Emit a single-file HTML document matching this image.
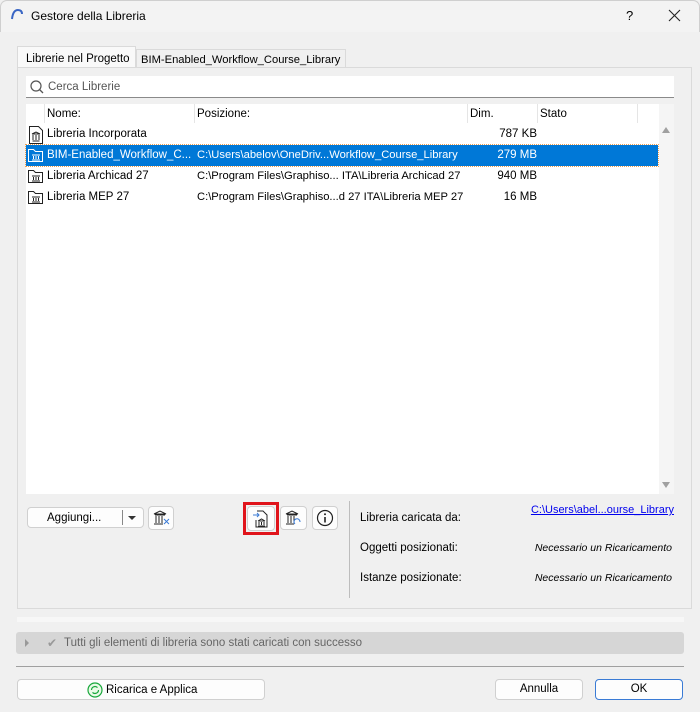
<!DOCTYPE html>
<html><head><meta charset="utf-8"><style>
*{box-sizing:border-box;margin:0;padding:0}
body{width:700px;height:712px;background:#f0f0f0;font-family:"Liberation Sans","DejaVu Sans",sans-serif;font-size:11.5px;color:#000;position:relative;overflow:hidden}
.a{position:absolute;white-space:nowrap}
.title{left:0;top:0;width:700px;height:32px;background:#f3f3f3;border:1px solid #cfcfcf;border-bottom:none;border-radius:7px 7px 0 0}
.btn{position:absolute;background:#fdfdfd;border:1px solid #d0d0d0;border-radius:4px;text-align:center}
.row{position:absolute;left:26px;width:632px;height:21px;line-height:21px;white-space:nowrap}
.row span{position:absolute}
.row .p{left:171px;font-size:11.2px}
.row .r{right:121px;text-align:right}
.sel{background:#0078d7;color:#fff;outline:1px dotted #f0a050}
.rt{position:absolute;right:26px;text-align:right;white-space:nowrap}
</style></head><body>
<div class="a title"></div>
<svg class="a" style="left:10px;top:8px" width="14" height="12"><path d="M2 11 Q3 2 8 2 Q12 2 12 6" fill="none" stroke="#3a66c4" stroke-width="2"/></svg>
<div class="a" style="left:31px;top:9px;font-size:12px">Gestore della Libreria</div>
<div class="a" style="left:626px;top:8px;font-size:13px">?</div>
<svg class="a" style="left:668px;top:9px" width="13" height="13"><path d="M1 1L12 12M12 1L1 12" stroke="#222" stroke-width="1.1"/></svg>
<!-- tabs -->
<div class="a" style="left:17px;top:46px;width:119px;height:22px;background:#f9f9f9;border:1px solid #dadada;border-bottom:none;padding:6px 0 0 8px;font-size:11.5px">Librerie nel Progetto</div>
<div class="a" style="left:136px;top:49px;width:210px;height:19px;background:#f0f0f0;border:1px solid #dadada;border-bottom:none;padding:4px 0 0 4px;font-size:11.2px">BIM-Enabled_Workflow_Course_Library</div>
<div class="a" style="left:17px;top:67px;width:675px;height:542px;border:1px solid #dadada;background:#f0f0f0"></div>
<!-- search -->
<div class="a" style="left:26px;top:76px;width:648px;height:22px;background:#fff;border-bottom:1px solid #8a8a8a"></div>
<svg class="a" style="left:29px;top:79px" width="16" height="16"><circle cx="7" cy="7" r="5" fill="none" stroke="#555" stroke-width="1.2"/><path d="M10.5 10.5 L14 14" stroke="#555" stroke-width="1.3"/></svg>
<div class="a" style="left:48px;top:81px;color:#555">Cerca Librerie</div>
<!-- list -->
<div class="a" style="left:26px;top:104px;width:648px;height:390px;background:#fff"></div>
<div class="a" style="left:26px;top:104px;width:632px;height:19px;background:#fff">
<div class="a" style="left:18px;top:0;height:19px;border-left:1px solid #e5e5e5"></div>
<div class="a" style="left:21px;top:4px">Nome:</div>
<div class="a" style="left:168px;top:0;height:19px;border-left:1px solid #e5e5e5"></div>
<div class="a" style="left:171px;top:4px">Posizione:</div>
<div class="a" style="left:441px;top:0;height:19px;border-left:1px solid #e5e5e5"></div>
<div class="a" style="left:444px;top:4px">Dim.</div>
<div class="a" style="left:511px;top:0;height:19px;border-left:1px solid #e5e5e5"></div>
<div class="a" style="left:514px;top:4px">Stato</div>
<div class="a" style="left:611px;top:0;height:19px;border-left:1px solid #e5e5e5"></div>
</div>
<div class="a" style="left:659px;top:104px;width:15px;height:390px;background:#f5f5f5"></div>
<div class="a" style="left:662px;top:127px;border:4px solid transparent;border-bottom:6px solid #a0a0a0;border-top:none"></div>
<div class="a" style="left:662px;top:482px;border:4px solid transparent;border-top:6px solid #a0a0a0;border-bottom:none"></div>

<div class="row" style="top:124px"><span style="left:21px">Libreria Incorporata</span><span class="r">787 KB</span></div>
<div class="row sel" style="top:145px"><span style="left:21px">BIM-Enabled_Workflow_C...</span><span class="p">C:\Users\abelov\OneDriv...Workflow_Course_Library</span><span class="r">279 MB</span></div>
<div class="row" style="top:166px"><span style="left:21px">Libreria Archicad 27</span><span class="p">C:\Program Files\Graphiso... ITA\Libreria Archicad 27</span><span class="r">940 MB</span></div>
<div class="row" style="top:187px"><span style="left:21px">Libreria MEP 27</span><span class="p">C:\Program Files\Graphiso...d 27 ITA\Libreria MEP 27</span><span class="r">16 MB</span></div>
<svg class="a" style="left:28px;top:125px" width="16" height="84">
<g fill="none" stroke="#222" stroke-width="1"><path d="M1.5 1.5h9l4 4v13h-13z"/><path d="M4 9h8M4.5 16h7M5 10v5M8 10v5M11 10v5M4 9l4-2 4 2"/></g>
<g fill="none" stroke="#fff" stroke-width="1" transform="translate(0,21)"><path d="M0.5 3.5h5l2 2h7v10h-14z"/><path d="M4 9h8M4 14h8M5.5 10v3M8 10v3M10.5 10v3"/></g>
<g fill="none" stroke="#222" stroke-width="1" transform="translate(0,42)"><path d="M0.5 3.5h5l2 2h7v10h-14z"/><path d="M4 9h8M4 14h8M5.5 10v3M8 10v3M10.5 10v3"/></g>
<g fill="none" stroke="#222" stroke-width="1" transform="translate(0,63)"><path d="M0.5 3.5h5l2 2h7v10h-14z"/><path d="M4 9h8M4 14h8M5.5 10v3M8 10v3M10.5 10v3"/></g>
</svg>
<!-- bottom buttons -->
<div class="btn" style="left:27px;top:507px;width:117px;height:21px"></div>
<div class="a" style="left:47px;top:512px">Aggiungi...</div>
<div class="a" style="left:122px;top:510px;height:15px;border-left:1px solid #888"></div>
<div class="a" style="left:128px;top:516px;border:4px solid transparent;border-top:4px solid #333;border-bottom:none"></div>
<div class="btn" style="left:148px;top:506px;width:26px;height:24px"></div>
<svg class="a" style="left:152px;top:509px" width="20" height="18"><g fill="none" stroke="#222"><path d="M2 5l6-3 6 3zM3 6h10M4 7v7M7 7v7M10 7v7M2 15h9"/></g><path d="M12 10l5 5M17 10l-5 5" stroke="#3a7bd5"/></svg>
<div class="a" style="left:243px;top:502px;width:36px;height:33px;border:3px solid #e0141b"></div>
<div class="btn" style="left:247px;top:506px;width:28px;height:25px"></div>
<svg class="a" style="left:252px;top:509px" width="18" height="20"><g fill="none" stroke="#222"><path d="M5 2h6l4 4v12H4V11"/><path d="M6 12h7M6 17h7M7 13v3M9.5 13v3M12 13v3M6 12l3.5-2 3.5 2"/></g><path d="M1 6h6M5 4l2 2-2 2" fill="none" stroke="#3a7bd5"/></svg>
<div class="btn" style="left:280px;top:506px;width:27px;height:24px"></div>
<svg class="a" style="left:284px;top:509px" width="20" height="18"><g fill="none" stroke="#222"><path d="M2 5l6-3 6 3zM3 6h10M4 7v7M7 7v7M10 7v7M2 15h8"/></g><path d="M11 15a3 3 0 1 1 5 -2" fill="none" stroke="#3a7bd5"/></svg>
<div class="btn" style="left:312px;top:506px;width:26px;height:24px"></div>
<svg class="a" style="left:316px;top:509px" width="18" height="18"><circle cx="9" cy="9" r="7.5" fill="none" stroke="#222" stroke-width="1.2"/><path d="M9 8v5.5" stroke="#222" stroke-width="1.6"/><circle cx="9" cy="5.3" r="1" fill="#222"/></svg>
<div class="a" style="left:349px;top:501px;height:97px;border-left:1px solid #bdbdbd"></div>
<div class="a" style="left:360px;top:512px">Libreria caricata da:</div>
<div class="rt" style="top:504px;color:#0000ee;text-decoration:underline;font-size:11px">C:\Users\abel...ourse_Library</div>
<div class="a" style="left:360px;top:542px">Oggetti posizionati:</div>
<div class="rt" style="top:542px;font-style:italic;font-size:10.5px;right:28px">Necessario un Ricaricamento</div>
<div class="a" style="left:360px;top:572px">Istanze posizionate:</div>
<div class="rt" style="top:572px;font-style:italic;font-size:10.5px;right:28px">Necessario un Ricaricamento</div>
<div class="a" style="left:17px;top:617px;width:667px;height:5px;background:#f7f7f7"></div>
<!-- status -->
<div class="a" style="left:16px;top:632px;width:668px;height:22px;background:#d6d6d6;border-radius:3px"></div>
<div class="a" style="left:25px;top:639px;border:4px solid transparent;border-left:4px solid #999;border-right:none"></div>
<div class="a" style="left:47px;top:636px;color:#999;font-size:12px">✔</div>
<div class="a" style="left:64px;top:637px;color:#666">Tutti gli elementi di libreria sono stati caricati con successo</div>
<div class="a" style="left:16px;top:666px;width:668px;border-top:1px solid #a0a0a0"></div>
<div class="btn" style="left:17px;top:679px;width:248px;height:21px"></div>
<svg class="a" style="left:87px;top:682px" width="16" height="16"><circle cx="8" cy="8" r="7" fill="#eafbe8" stroke="#19a83c" stroke-width="1.2"/><path d="M4.5 8a3.5 3.5 0 0 1 6-2.4M11.5 8a3.5 3.5 0 0 1-6 2.4" fill="none" stroke="#19a83c" stroke-width="1.2"/></svg>
<div class="a" style="left:106px;top:684px">Ricarica e Applica</div>
<div class="btn" style="left:495px;top:679px;width:88px;height:21px;line-height:19px">Annulla</div>
<div class="btn" style="left:595px;top:679px;width:88px;height:21px;line-height:19px;border-color:#3a7bd5">OK</div>
</body></html>
